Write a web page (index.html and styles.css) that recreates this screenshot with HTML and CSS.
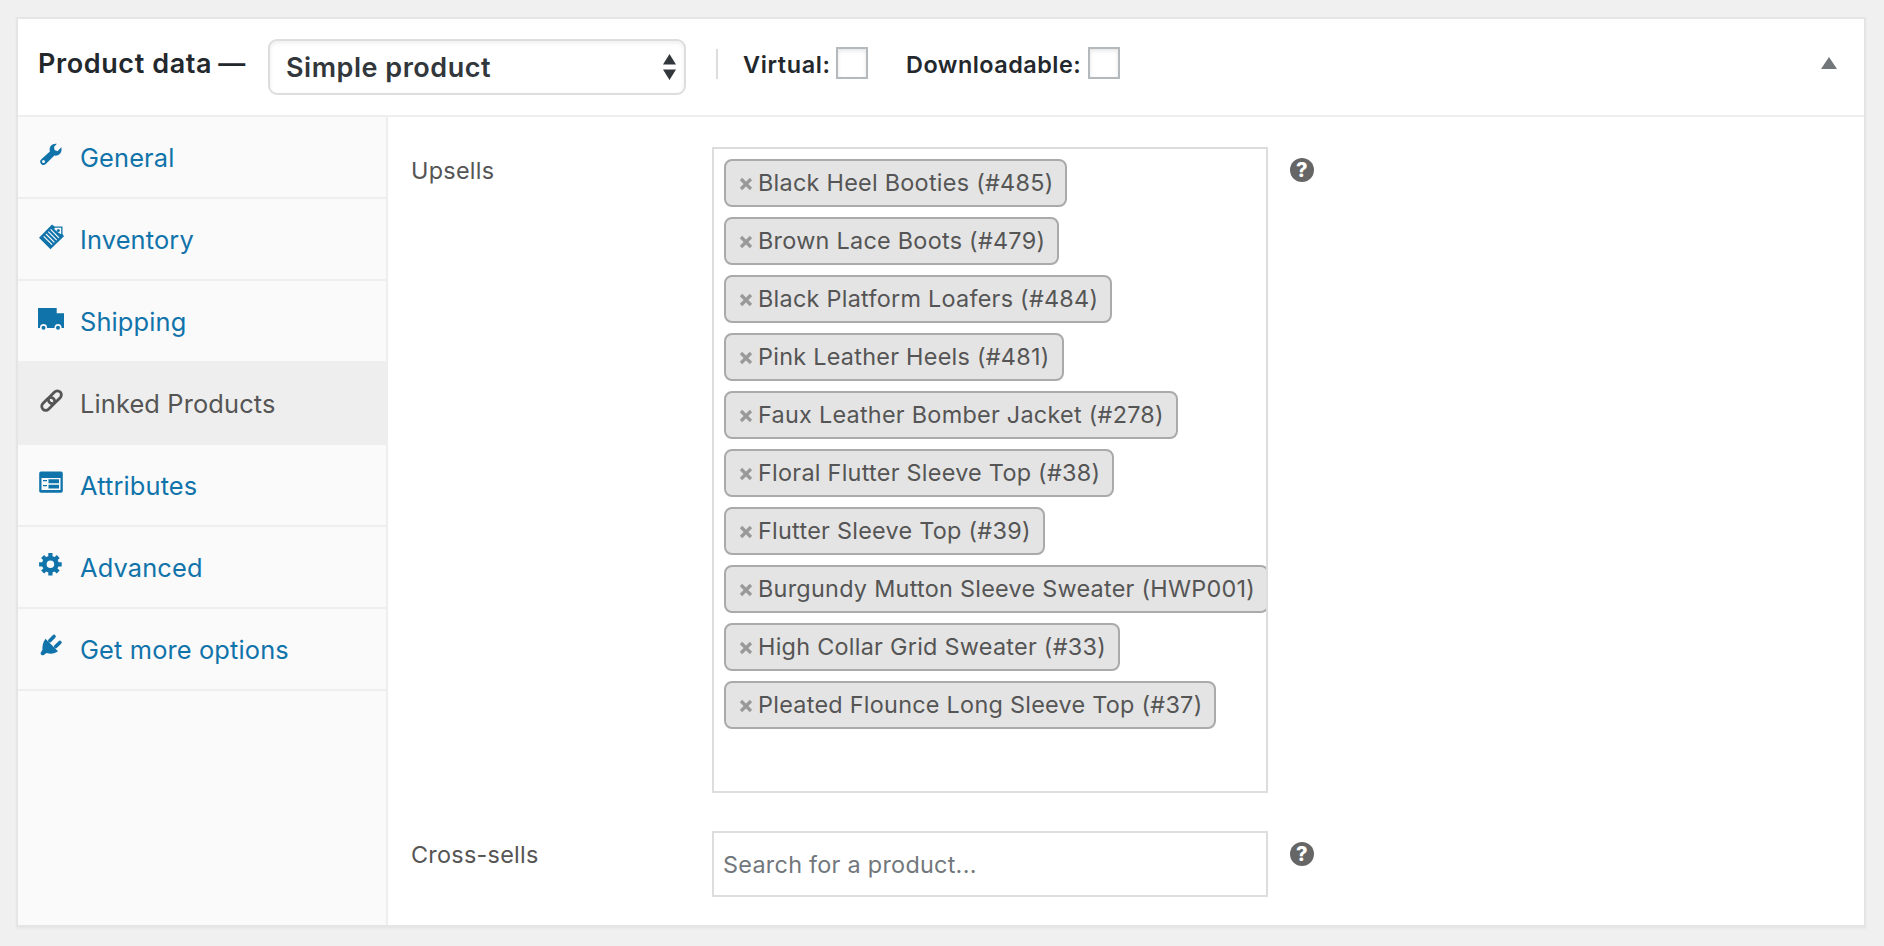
FILE: index.html
```html
<!DOCTYPE html>
<html lang="en">
<head>
<meta charset="utf-8">
<title>Product data</title>
<link rel="stylesheet" href="styles.css">
</head>
<body>
<section class="panel">
  <header class="panel-header">
    <h2 class="title">Product data<span class="dash">—</span></h2>
    <div class="select"><span class="select-value">Simple product</span>
      <svg class="select-arrows" viewBox="0 0 13 26"><path d="M6.500 0L13 10.500H0zM6.500 26L0 15.500h13z"/></svg>
    </div>
    <span class="divider"></span>
    <label class="option virtual"><span>Virtual:</span><i class="checkbox"></i></label>
    <label class="option downloadable"><span>Downloadable:</span><i class="checkbox"></i></label>
    <svg class="toggle" viewBox="0 0 16 12"><path d="M8 0l8 12H0z"/></svg>
  </header>
  <div class="panel-body">
    <nav class="tabs">
      <a class="tab"><svg class="icon" viewBox="0 0 26 26"><path d="M23.300 5.200L19.500 9.200l-3-1.300-.4-3.200L18.900 1.800c-3.600-.9-7.900 2-7.200 6.600l.2 1L3.300 17.300a3.200 3.200 0 0 0 4.500 4.700l8.600-8.400c4.400.9 8.300-3.400 6.900-8.400zM5.500 21.100a1.500 1.500 0 1 1 0-3 1.500 1.500 0 0 1 0 3z"/></svg><span>General</span></a>
      <a class="tab"><svg class="icon" viewBox="0 0 26 26"><path d="M14 0.500L1 13.800 12.500 25.200 26 12.300 24.500 10V2.500h-8z"/><path class="cut" d="M16.800 3.800h6.400v6.500l-2.600-1.600-4.300-3.500z"/><circle cx="20.300" cy="6.600" r="1.500"/><path class="lines" d="M12.600 5.400l8.400 8.400M10.300 7.700l8.400 8.400M8 10l8.400 8.400M5.700 12.300l8.400 8.400"/></svg><span>Inventory</span></a>
      <a class="tab"><svg class="icon" viewBox="0 0 26 26"><path d="M0 2h18.700v5.300H26V22H0z"/><g class="cut"><circle cx="5.500" cy="21.600" r="3.500"/><circle cx="20" cy="21.600" r="3.500"/></g><circle cx="5.500" cy="21.800" r="2"/><circle cx="20" cy="21.800" r="2"/></svg><span>Shipping</span></a>
      <a class="tab active"><svg class="icon" viewBox="0 0 26 26"><g class="chain"><rect x="-7.500" y="-4" width="15" height="8" rx="4" transform="translate(10.200 15.900) rotate(-45)"/><rect x="-7.500" y="-4" width="15" height="8" rx="4" transform="translate(16.900 9.300) rotate(-45)"/></g></svg><span>Linked Products</span></a>
      <a class="tab"><svg class="icon" viewBox="0 0 26 26"><path d="M3 1.500h20a1.800 1.800 0 0 1 1.800 1.800V21a1.800 1.800 0 0 1-1.800 1.800H3A1.800 1.800 0 0 1 1.200 21V3.300A1.800 1.800 0 0 1 3 1.500z"/><path class="cut" d="M3.500 8h19v12h-19z"/><path d="M5 10h4v1.300H5zM5 15h4v1.300H5zM10.500 9.300H21v3.900H10.500zM10.500 14.700H21v3.900H10.500z"/></svg><span>Attributes</span></a>
      <a class="tab"><svg class="icon" viewBox="0 0 26 26"><circle class="gear-ring" cx="12.400" cy="12.300" r="6.100"/><path class="gear-teeth" d="M12.400 1v4M12.400 19.600v4M1.100 12.300h4M19.700 12.300h4M4.600 4.500l2.700 2.700M17.500 17.400l2.700 2.700M20.200 4.500l-2.700 2.700M7.300 17.400l-2.700 2.700"/></svg><span>Advanced</span></a>
      <a class="tab"><svg class="icon" viewBox="0 0 26 26"><path d="M7.500 4.700L20 17.200c-3.200 2.600-7 2.900-11.500 1.900L6.200 20.700c-2 1.600-4.600-.6-3.100-2.700l1.300-2.100C4.300 11.800 5 7.800 7.500 4.700z"/><path class="prongs" d="M11.800 6.700l4.200-4.200M17.700 12.600l4.200-4.200"/></svg><span>Get more options</span></a>
    </nav>
    <div class="fields">
      <div class="field">
        <div class="label">Upsells</div>
        <ul class="box tags">
          <li class="tag"><svg class="x" viewBox="0 0 12 12"><path d="M1 1l10 10M11 1l-10 10"/></svg><span>Black Heel Booties (#485)</span></li>
          <li class="tag"><svg class="x" viewBox="0 0 12 12"><path d="M1 1l10 10M11 1l-10 10"/></svg><span>Brown Lace Boots (#479)</span></li>
          <li class="tag"><svg class="x" viewBox="0 0 12 12"><path d="M1 1l10 10M11 1l-10 10"/></svg><span>Black Platform Loafers (#484)</span></li>
          <li class="tag"><svg class="x" viewBox="0 0 12 12"><path d="M1 1l10 10M11 1l-10 10"/></svg><span>Pink Leather Heels (#481)</span></li>
          <li class="tag"><svg class="x" viewBox="0 0 12 12"><path d="M1 1l10 10M11 1l-10 10"/></svg><span>Faux Leather Bomber Jacket (#278)</span></li>
          <li class="tag"><svg class="x" viewBox="0 0 12 12"><path d="M1 1l10 10M11 1l-10 10"/></svg><span>Floral Flutter Sleeve Top (#38)</span></li>
          <li class="tag"><svg class="x" viewBox="0 0 12 12"><path d="M1 1l10 10M11 1l-10 10"/></svg><span>Flutter Sleeve Top (#39)</span></li>
          <li class="tag"><svg class="x" viewBox="0 0 12 12"><path d="M1 1l10 10M11 1l-10 10"/></svg><span>Burgundy Mutton Sleeve Sweater (HWP001)</span></li>
          <li class="tag"><svg class="x" viewBox="0 0 12 12"><path d="M1 1l10 10M11 1l-10 10"/></svg><span>High Collar Grid Sweater (#33)</span></li>
          <li class="tag"><svg class="x" viewBox="0 0 12 12"><path d="M1 1l10 10M11 1l-10 10"/></svg><span>Pleated Flounce Long Sleeve Top (#37)</span></li>
        </ul>
        <span class="help">?</span>
      </div>
      <div class="field">
        <div class="label">Cross-sells</div>
        <div class="box search"><span>Search for a product...</span></div>
        <span class="help">?</span>
      </div>
    </div>
  </div>
</section>
</body>
</html>
```

FILE: styles.css
```css
* { box-sizing: border-box; }
body {
  margin: 0;
  padding: 17px 16px 0;
  height: 946px;
  overflow: hidden;
  background: #f0f0f0;
  font-family: Inter, "Liberation Sans", sans-serif;
  font-size: 23.400px;
  letter-spacing: .27px;
  color: #555;
}
.panel {
  width: 1850px;
  height: 910px;
  display: flex;
  flex-direction: column;
  background: #fff;
  border: 2px solid #e5e5e5;
  box-shadow: 0 2px 2px rgba(0, 0, 0, .04);
}
.panel-header {
  height: 98px;
  flex: none;
  display: flex;
  align-items: flex-start;
  padding-left: 20px;
  border-bottom: 2px solid #eee;
  color: #23282d;
  font-weight: 600;
}
.title {
  margin: 0;
  width: 230px;
  padding-top: 28px;
  font-size: 27px;
  letter-spacing: .6px;
  line-height: 34px;
  font-weight: 600;
  white-space: nowrap;
}
.dash { margin-left: 6px; }
.select {
  width: 418px;
  height: 56px;
  margin-top: 20px;
  padding: 0 8px 0 16px;
  display: flex;
  align-items: center;
  justify-content: space-between;
  border: 2px solid #ddd;
  border-radius: 9px;
  box-shadow: inset 0 2px 4px rgba(0, 0, 0, .07);
  font-size: 27px;
  letter-spacing: .53px;
  color: #32373c;
}
.select-arrows { width: 13px; height: 26px; fill: #32373c; }
.divider { width: 2px; height: 30px; margin: 30px 25px 0 30px; background: #ddd; }
.option { display: flex; height: 32px; margin-top: 28px; line-height: 36px; letter-spacing: .5px; }
.virtual { width: 163px; }
.virtual span { width: 93px; letter-spacing: .65px; }
.downloadable span { width: 182px; }
.checkbox {
  width: 32px;
  height: 32px;
  border: 2px solid #b4b9be;
  background: #fff;
  box-shadow: inset 0 2px 4px rgba(0, 0, 0, .1);
}
.toggle { width: 16px; height: 12px; margin: 38px 27px 0 auto; fill: #72777c; }
.panel-body { flex: 1; display: flex; }
.tabs { width: 370px; background: #fafafa; border-right: 2px solid #eee; }
.tab {
  height: 82px;
  display: flex;
  align-items: center;
  padding-left: 20px;
  border-bottom: 2px solid #eee;
  font-size: 25.400px;
  letter-spacing: .14px;
  color: #1073aa;
}
.icon { width: 26px; height: 26px; margin: -4px 16px 0 0; fill: currentColor; overflow: visible; }
.active { background: #eee; color: #555; }
.cut { fill: #fafafa; }
.lines { fill: none; stroke: #fafafa; stroke-width: 1.200; }
.chain { fill: none; stroke: currentColor; stroke-width: 2.800; }
.gear-ring { fill: none; stroke: currentColor; stroke-width: 4.600; }
.gear-teeth { stroke: currentColor; stroke-width: 4.200; }
.prongs { stroke: currentColor; stroke-width: 3.600; stroke-linecap: round; }
.fields { flex: 1; padding: 30px 0 0 23px; display: flex; flex-direction: column; gap: 38px; }
.field { display: flex; align-items: flex-start; }
.label { width: 301px; padding-top: 9px; line-height: 30px; }
.box { width: 556px; margin: 0; border: 2px solid #ddd; background: #fff; overflow: hidden; }
.tags { height: 646px; padding: 10px; list-style: none; display: flex; flex-direction: column; align-items: flex-start; gap: 10px; }
.tag {
  height: 48px;
  flex: none;
  display: flex;
  align-items: center;
  padding: 0 12px 2px 14px;
  border: 2px solid #aaa;
  border-radius: 8px;
  background: #e4e4e4;
  white-space: nowrap;
}
.x { width: 12px; height: 12px; margin: 4px 6px 0 0; stroke: #999; stroke-width: 3.200; overflow: visible; }
.search { height: 66px; display: flex; align-items: center; padding-left: 9px; color: #72777c; }
.help {
  width: 24px;
  height: 24px;
  margin: 11px 0 0 22px;
  border-radius: 50%;
  background: #666;
  color: #fff;
  font-size: 20px;
  font-weight: 800;
  line-height: 24px;
  text-align: center;
}
```
